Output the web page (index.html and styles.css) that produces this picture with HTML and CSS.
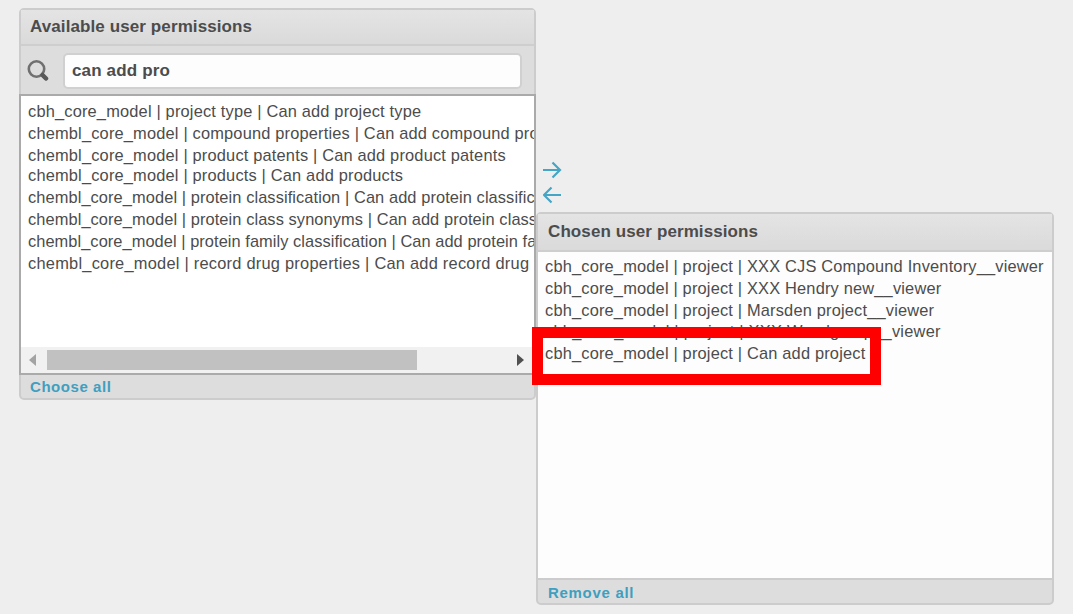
FILE: index.html
```html
<!DOCTYPE html>
<html lang="en">
<head>
<meta charset="utf-8">
<title>User permissions</title>
<link rel="stylesheet" href="styles.css">
</head>
<body>
<main class="selector">
  <section class="panel available">
    <h2 class="title">Available user permissions</h2>
    <div class="filter">
      <svg class="search" width="22" height="22" viewBox="0 0 22 22" fill="none"><circle cx="9.500" cy="9" r="7.700" stroke="#707070" stroke-width="2.600"/><path d="M15.500 15 19 18.500" stroke="#585858" stroke-width="4.500" stroke-linecap="round"/></svg>
      <div class="field">can add pro</div>
    </div>
    <div class="list">
      <ul class="options">
        <li>cbh_core_model | project type | Can add project type</li>
        <li>chembl_core_model | compound properties | Can add compound properties</li>
        <li>chembl_core_model | product patents | Can add product patents</li>
        <li class="raised">chembl_core_model | products | Can add products</li>
        <li class="narrow">chembl_core_model | protein classification | Can add protein classification</li>
        <li class="narrow">chembl_core_model | protein class synonyms | Can add protein class synonyms</li>
        <li class="tight">chembl_core_model | protein family classification | Can add protein family classification</li>
        <li class="wide">chembl_core_model | record drug properties | Can add record drug properties</li>
      </ul>
      <div class="scrollbar">
        <svg width="8" height="12" viewBox="0 0 8 12"><path d="M7 0v12L0 6z" fill="#a3a3a3"/></svg>
        <span class="thumb"></span>
        <svg width="8" height="12" viewBox="0 0 8 12"><path d="M0 0v12l7-6z" fill="#505050"/></svg>
      </div>
    </div>
    <a class="all">Choose all</a>
  </section>
  <div class="side">
    <div class="arrows">
      <svg width="19" height="18" viewBox="0 0 19 18" fill="none" stroke="#45a5c4" stroke-width="2.200"><path d="M0 9h17M9.500 1.500 17 9l-7.500 7.500"/></svg>
      <svg width="19" height="18" viewBox="0 0 19 18" fill="none" stroke="#45a5c4" stroke-width="2.200"><path d="M18 9H1M8.500 1.500 1 9l7.500 7.500"/></svg>
    </div>
    <section class="panel chosen">
      <h2 class="title">Chosen user permissions</h2>
      <ul class="options">
        <li>cbh_core_model | project | XXX CJS Compound Inventory__viewer</li>
        <li>cbh_core_model | project | XXX Hendry new__viewer</li>
        <li>cbh_core_model | project | Marsden project__viewer</li>
        <li class="wide">cbh_core_model | project | XXX Wandgroup__viewer</li>
        <li>cbh_core_model | project | Can add project</li>
      </ul>
      <a class="all">Remove all</a>
    </section>
  </div>
  <div class="highlight"></div>
</main>
</body>
</html>
```
FILE: styles.css
```css
* { box-sizing: border-box; }
body { margin: 0; background: #eee; color: #4c4c4c; font-family: "Liberation Sans", Arial, sans-serif; }
.selector { position: relative; display: flex; align-items: flex-start; width: 1073px; height: 614px; padding: 8px 19px; overflow: hidden; }
.panel { display: flex; flex-direction: column; border: 2px solid #ccc; border-radius: 5px; background: #ddd; }
.available { width: 517px; height: 392px; }
.title { margin: 0; height: 36px; flex: none; padding-left: 9px; border-bottom: 2px solid #cecece; background: linear-gradient(#e4e4e4, #dadada); font-size: 17px; line-height: 34px; letter-spacing: 0.1px; white-space: nowrap; }
.filter { display: flex; flex: none; align-items: center; height: 48px; padding: 2px 12px 0 6px; }
.search { flex: none; margin-right: 14px; }
.field { flex: 1; height: 36px; padding-left: 7px; border: 2px solid #d0d0d0; border-radius: 5px; background: #fdfdfd; font-weight: bold; font-size: 17px; line-height: 32px; letter-spacing: 0.15px; }
.list { display: flex; flex-direction: column; justify-content: space-between; height: 281px; flex: none; margin: 0 -2px; border: 2px solid #aaa; background: #fff; }
.options { margin: 0; padding: 5px 0 0 7px; list-style: none; overflow: hidden; font-size: 16.4px; line-height: 21.8px; letter-spacing: 0.18px; white-space: nowrap; }
.raised { margin-top: -1px; }
.wide { letter-spacing: 0.24px; }
.narrow { letter-spacing: 0.09px; }
.tight { letter-spacing: 0.06px; }
.scrollbar { display: flex; align-items: center; height: 26px; padding: 0 8px; background: #f1f1f1; }
.thumb { width: 370px; height: 20px; margin: 0 100px 0 10px; flex: none; background: #c1c1c1; }
.scrollbar svg { flex: none; }
.all { padding-left: 9px; color: #3f9fc0; font-size: 15px; line-height: 24px; font-weight: bold; letter-spacing: 0.55px; }
.available .all { line-height: 23px; }
.side { width: 518px; }
.arrows { display: flex; flex-direction: column; gap: 7px; height: 204px; padding: 153px 0 0 7px; }
.chosen { position: relative; width: 518px; height: 393px; }
.chosen .title { height: 38px; padding-left: 10px; line-height: 36px; }
.chosen .options { flex: 1; padding: 4px 0 0 7px; border-bottom: 2px solid #ccc; background: #fdfdfd; }
.chosen .all { height: 23px; padding: 1px 0 0 10px; letter-spacing: 0.7px; }
.highlight { position: absolute; left: 532px; top: 327px; width: 349px; height: 58px; border: 11px solid #f00; }
```
